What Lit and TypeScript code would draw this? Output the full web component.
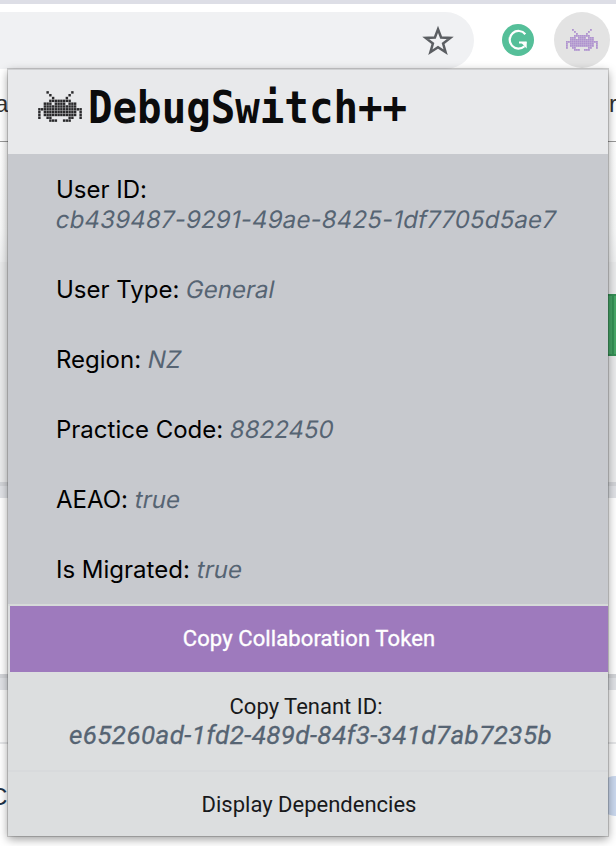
import { LitElement, html, css, svg } from "lit";
import { customElement, property } from "lit/decorators.js";

const INVADER = [
  "...#........#...",
  "....#......#....",
  ".....#....#.....",
  "....########....",
  "..###.####.###..",
  "..############..",
  "################",
  "#.############.#",
  "#.############.#",
  "#..##......##..#",
  "....###..###....",
];

@customElement("pixel-invader")
class PixelInvader extends LitElement {
  @property({ type: Number }) cell = 0.88;
  static styles = css`
    :host { display: block; }
    svg { display: block; width: 100%; height: 100%; fill: currentColor; }
  `;
  render() {
    return html`<svg viewBox="0 0 16 11" preserveAspectRatio="none">
      ${INVADER.flatMap((row, y) =>
        [...row].map((c, x) =>
          c === "#" ? svg`<rect x=${x + 0.06} y=${y + 0.06} width=${this.cell} height=${this.cell}></rect>` : null
        )
      )}
    </svg>`;
  }
}

@customElement("app-root")
class AppRoot extends LitElement {
  static styles = css`
    :host {
      display: block; position: relative; width: 616px; height: 846px; overflow: hidden;
      background: #fff; font-family: Inter, "Liberation Sans", sans-serif; color: #000;
    }
    * { box-sizing: border-box; }
    .page { display: flex; flex-direction: column; height: 846px; }
    .tabs { height: 4px; background: #dddee6; }
    .toolbar { height: 72px; padding-top: 8px; display: flex; align-items: flex-start; }
    .omnibox { width: 474px; height: 57px; border-radius: 0 29px 29px 0; background: #f0f1f3;
      display: flex; align-items: center; justify-content: flex-end; padding-right: 20px; }
    .star { width: 32px; height: 32px; display: block; }
    .gram { width: 32px; height: 32px; margin: 12px 20px 0 28px; display: block; }
    .ext { width: 56px; height: 56px; border-radius: 50%; background: #e3e3e3; display: flex; align-items: center; justify-content: center; }
    .ext pixel-invader { width: 32px; height: 22px; color: #a07cc9; }
    .strip { display: flex; justify-content: space-between; font: 24px/30px "Liberation Sans", sans-serif; color: #333; }
    .bar { height: 66px; border-bottom: 1px solid #999; padding-top: 13px; }
    .bar span:first-child { margin-left: -5px; }
    .bar span:last-child { width: 7px; white-space: nowrap; }
    .pale { height: 120px; background: linear-gradient(#fff, #f8f9f9 75%, #eff0f1); }
    .grey { height: 220px; background: #eaebec; padding-top: 32px; }
    .green { width: 9px; height: 62px; margin-left: auto; background: linear-gradient(90deg, #45a266 0 5px, #348f55 5px 7px, #48a868 7px);
      border: 2px solid #348f55; border-left: 0; border-right: 0; }
    .gap { height: 16px; background: #e0e2e6; border-top: 4px solid #d2d4d8; }
    .card { height: 176px; background: #fff; }
    .sub { height: 54px; border-bottom: 2px solid #e5e6e8; background: #fcfcfc; }
    .last { flex: 1; padding-top: 38px; color: #1e3347; }
    .last span { margin-left: -10px; }
    .blob { width: 30px; height: 40px; margin: -6px -14px 0 0; border-radius: 20px; background: #cbd9ef; }

    .popup { position: absolute; left: 8px; top: 69px; width: 600px; height: 767px; background: #dcdedf;
      box-shadow: 0 0 0 1px rgba(0,0,0,.16), 0 3px 9px rgba(0,0,0,.4); display: flex; flex-direction: column; }
    .head { height: 85px; background: #e8e9eb; display: flex; align-items: flex-start; padding: 21px 0 0 30px; border-top: 1px solid #d0d1d3; }
    .head pixel-invader { width: 44px; height: 31px; color: #29292b; }
    .title { margin: -11px 0 0 6px; font: bold 45px/56px "DejaVu Sans Mono", monospace; white-space: nowrap;
      transform: scaleX(.906); transform-origin: 0 0; color: #0b0b0c; }
    .info { height: 450px; background: #c7c9ce; padding: 21px 0 0 48px; display: flex; flex-direction: column; gap: 40px;
      font-size: 24px; line-height: 30px; white-space: nowrap; font-feature-settings: "calt" 0; }
    .value { display: inline-block; color: #566473; transform: skewX(-11deg); transform-origin: 0 70%; margin-left: -1px; }
    .uid { display: table; letter-spacing: .17px; }
    .actions { flex: 1; border-top: 2px solid #d6dad9; display: flex; flex-direction: column; font-family: Roboto, sans-serif;
      font-size: 22px; line-height: 28px; text-align: center; color: #18191b; }
    .copy { height: 66px; margin-left: 2px; background: #9e7abd; color: #fff; padding-top: 19px; -webkit-text-stroke: .35px #fff; letter-spacing: .1px; }
    .tenant { height: 100px; border-bottom: 2px solid #d8dadc; padding-top: 21px; }
    .tenant i { display: block; font-size: 26px; line-height: 29px; white-space: nowrap; color: #566473; -webkit-text-stroke: .3px #566473; letter-spacing: .4px; padding-left: 5px; }
    .tenant span { margin-right: 4px; }
    .deps { padding: 19px 0 0 2px; }
  `;
  render() {
    const rows = [["User Type:", "General"], ["Region:", "NZ"], ["Practice Code:", "8822450"], ["AEAO:", "true"], ["Is Migrated:", "true"]];
    return html`
      <div class="page">
        <div class="tabs"></div>
        <div class="toolbar">
          <div class="omnibox">
            <svg class="star" viewBox="0 0 32 32" fill="none" stroke="#5b5e62" stroke-width="2.5"><path d="M16 4.3 19.1 12.5 28.3 12.9 21.1 18.5 23.6 27.2 16 22.2 8.4 27.2 10.9 18.5 3.7 12.9 12.9 12.5Z"/></svg>
          </div>
          <svg class="gram" viewBox="0 0 32 32" fill="none" stroke="#fff" stroke-width="2.2"><circle cx="16" cy="16" r="16" fill="#55bf99" stroke="none"/><path d="M23.3 10.2A8.8 8.8 0 1 0 22.5 22.2M17 18.5H24.5"/><path d="M19 18.6 24.7 17.8 24.7 24.5Z" fill="#fff" stroke="none"/></svg>
          <div class="ext"><pixel-invader .cell=${0.8}></pixel-invader></div>
        </div>
        <div class="strip bar"><span>a</span><span>r</span></div>
        <div class="pale"></div>
        <div class="grey"><div class="green"></div></div>
        <div class="gap"></div>
        <div class="card"></div>
        <div class="gap"></div>
        <div class="sub"></div>
        <div class="strip last"><span>C</span><div class="blob"></div></div>
      </div>
      <div class="popup">
        <div class="head"><pixel-invader></pixel-invader><div class="title">DebugSwitch++</div></div>
        <div class="info">
          <div><span>User ID:</span><span class="value uid">cb439487-9291-49ae-8425-1df7705d5ae7</span></div>
          ${rows.map(([k, v]) => html`<div><span>${k}</span> <span class="value">${v}</span></div>`)}
        </div>
        <div class="actions">
          <div class="copy">Copy Collaboration Token</div>
          <div class="tenant"><span>Copy Tenant ID:</span><i>e65260ad-1fd2-489d-84f3-341d7ab7235b</i></div>
          <div class="deps">Display Dependencies</div>
        </div>
      </div>`;
  }
}
